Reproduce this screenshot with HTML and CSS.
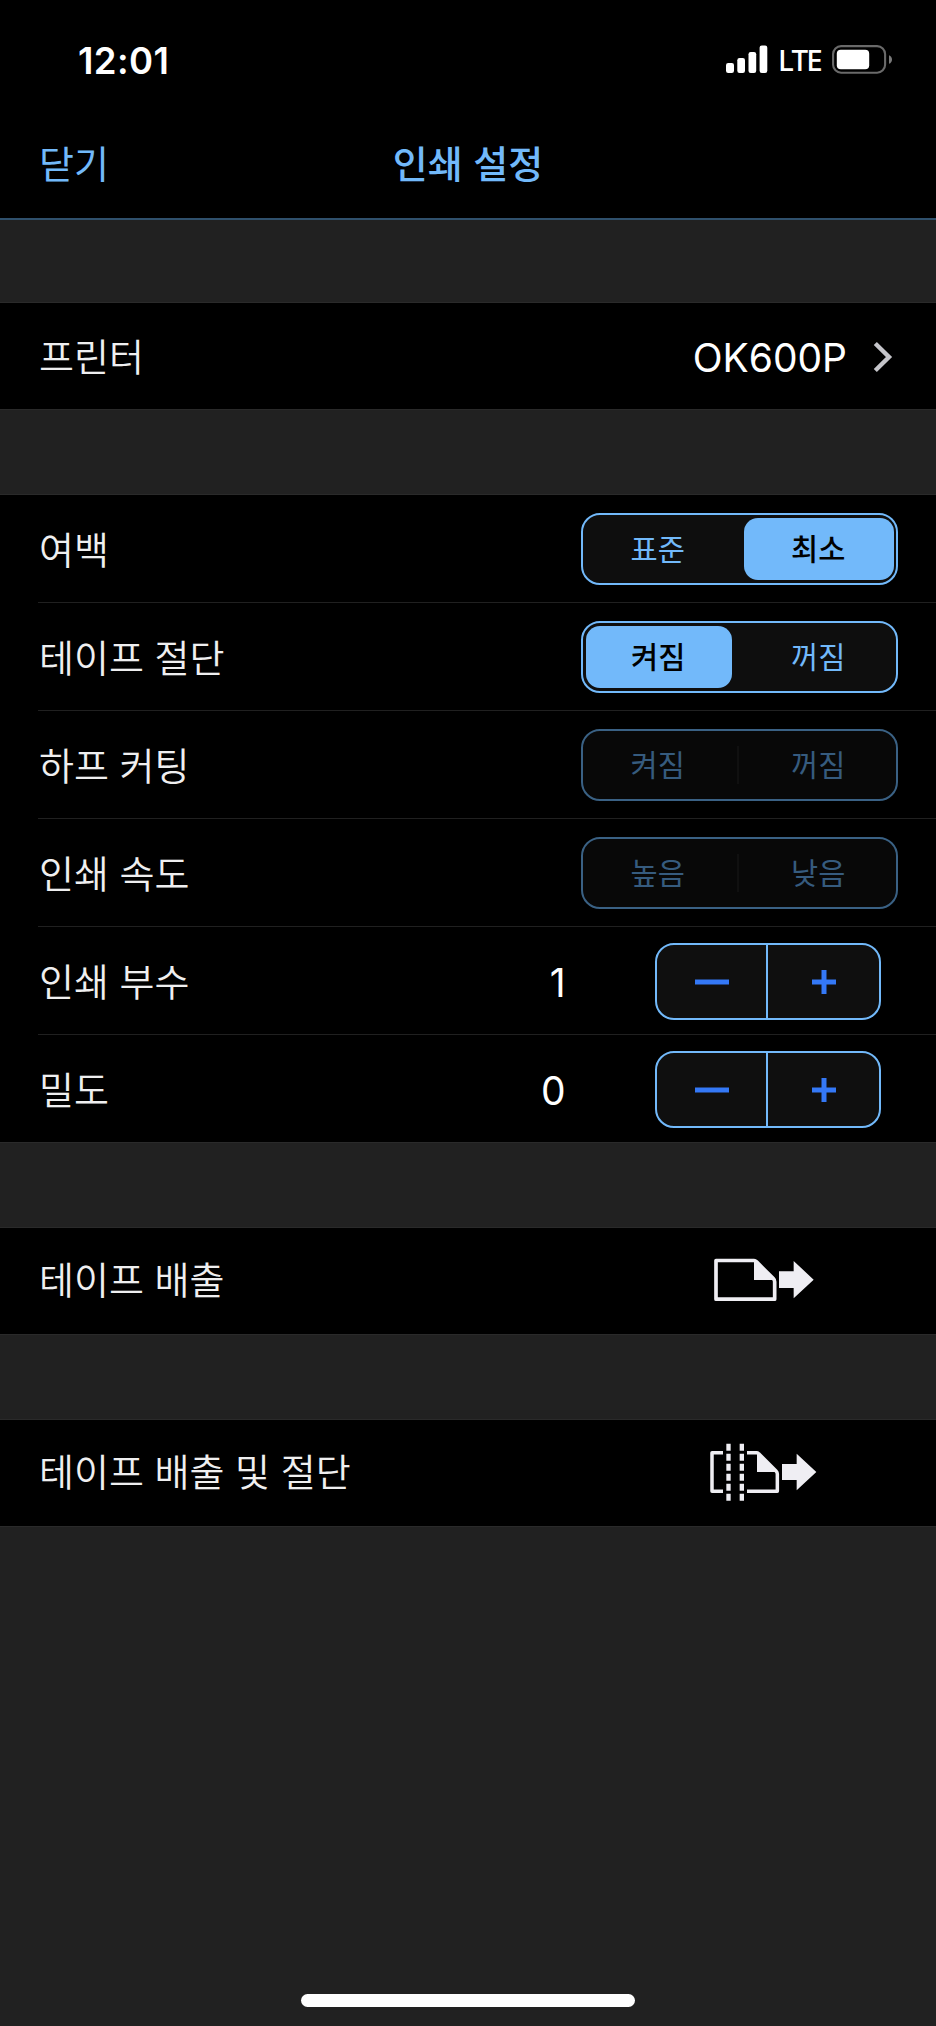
FILE: index.html
```html
<!DOCTYPE html>
<html lang="ko">
<head>
<meta charset="utf-8">
<title>인쇄 설정</title>
<link rel="stylesheet" href="styles.css">
</head>
<body>
<div class="screen">
  <header class="header">
    <div class="status">
      <span class="time">12:01</span>
      <div class="status-right">
        <svg class="signal" width="42" height="28" viewBox="0 0 42 28" fill="#fff">
          <rect x="0" y="18" width="8" height="10" rx="2.2"/>
          <rect x="11.3" y="13" width="7.7" height="15" rx="2.2"/>
          <rect x="22.5" y="7" width="7.7" height="21" rx="2.2"/>
          <rect x="33.6" y="0.5" width="7.7" height="27.5" rx="2.2"/>
        </svg>
        <span class="carrier">LTE</span>
        <svg class="battery" width="61" height="29" viewBox="0 0 61 29">
          <rect x="1.1" y="1.1" width="52" height="26.6" rx="8" fill="none" stroke="#6a6a6a" stroke-width="2.1"/>
          <rect x="4.8" y="4.8" width="32.4" height="19.4" rx="4" fill="#fff"/>
          <path d="M57 10.2c4 1.4 4 7.2 0 8.6z" fill="#7a7a7a"/>
        </svg>
      </div>
    </div>
    <nav class="nav">
      <span class="close">닫기</span>
      <h1 class="title">인쇄 설정</h1>
    </nav>
  </header>

  <main class="groups">
    <section class="group">
      <div class="row">
        <span class="label">프린터</span>
        <span class="printer">OK600P</span>
        <svg class="chevron" width="20" height="32" viewBox="0 0 20 32" fill="none" stroke="#c5c5ca" stroke-width="4.400"><path d="M2.3 2.5L16 16L2.3 29.5"/></svg>
      </div>
    </section>

    <section class="group">
      <div class="row">
        <span class="label">여백</span>
        <div class="segment"><span class="option">표준</span><i class="split"></i><span class="option selected end">최소</span></div>
      </div>
      <div class="row">
        <span class="label">테이프 절단</span>
        <div class="segment"><span class="option selected start">켜짐</span><i class="split"></i><span class="option">꺼짐</span></div>
      </div>
      <div class="row">
        <span class="label">하프 커팅</span>
        <div class="segment disabled"><span class="option">켜짐</span><i class="split"></i><span class="option">꺼짐</span></div>
      </div>
      <div class="row">
        <span class="label">인쇄 속도</span>
        <div class="segment disabled"><span class="option">높음</span><i class="split"></i><span class="option">낮음</span></div>
      </div>
      <div class="row">
        <span class="label">인쇄 부수</span>
        <span class="value">1</span>
        <div class="stepper">
          <span class="step"><svg width="36" height="26" viewBox="0 0 36 26"><path d="M1 13H35" stroke="#3478f6" stroke-width="5"/></svg></span>
          <span class="step"><svg width="26" height="26" viewBox="0 0 26 26"><path d="M1 13H25M13 1V25" stroke="#3478f6" stroke-width="5"/></svg></span>
        </div>
      </div>
      <div class="row">
        <span class="label">밀도</span>
        <span class="value">0</span>
        <div class="stepper">
          <span class="step"><svg width="36" height="26" viewBox="0 0 36 26"><path d="M1 13H35" stroke="#3478f6" stroke-width="5"/></svg></span>
          <span class="step"><svg width="26" height="26" viewBox="0 0 26 26"><path d="M1 13H25M13 1V25" stroke="#3478f6" stroke-width="5"/></svg></span>
        </div>
      </div>
    </section>

    <section class="group">
      <div class="row">
        <span class="label action">테이프 배출</span>
        <svg class="feed" width="116" height="60" viewBox="54 93 348 180" fill="#efeef3">
          <path d="M78 121.500H192Q196 121.500 199 125L250 176Q254 180 254 185V237.500H78Z" fill="none" stroke="#efeef3" stroke-width="11" stroke-linejoin="round"/>
          <path d="M192 118L256 180H192Z"/>
          <path d="M267 154H311V123L371 179L311 235V204H267Z"/>
        </svg>
      </div>
    </section>

    <section class="group">
      <div class="row">
        <span class="label action">테이프 배출 및 절단</span>
        <svg class="feed" width="116" height="60" viewBox="54 99 348 180" fill="#efeef3">
          <path d="M99 128H66V244H99M171 128H200Q204 128 207 132L258 183Q262 187 262 192V244H171" fill="none" stroke="#efeef3" stroke-width="10.500" stroke-linejoin="round"/>
          <path d="M201 124L264 186H201Z"/>
          <path d="M276 162H320V131L379 186L320 241V210H276Z"/>
          <path d="M115.500 101V272M155.500 101V272" fill="none" stroke="#efeef3" stroke-width="13" stroke-dasharray="21 9"/>
        </svg>
      </div>
    </section>
  </main>
  <div class="home"></div>
</div>
</body>
</html>
```
FILE: styles.css
```css
* { box-sizing: border-box; }

body {
  margin: 0;
  background: #212121;
  color: #efeff0;
  font-family: Inter, "Noto Sans CJK KR", sans-serif;
}

.screen { position: relative; width: 936px; height: 2026px; overflow: hidden; }

.header { height: 220px; background: #000; border-bottom: 2px solid #2f506c; }

.status {
  display: flex;
  align-items: center;
  justify-content: space-between;
  height: 118px;
  padding: 0 43px 0 78px;
  color: #fff;
}
.time { padding-top: 3px; font-size: 36.500px; font-weight: 600; letter-spacing: 0.400px; line-height: 44px; }
.status-right { display: flex; align-items: center; height: 30px; }
.signal { margin-right: 10px; }
.carrier {
  width: 54px;
  padding-top: 1px;
  font-family: "Noto Sans", sans-serif;
  font-size: 29.500px;
  font-weight: 500;
  letter-spacing: -1.700px;
  line-height: 30px;
}

.nav {
  display: grid;
  grid-template-columns: 200px 1fr 200px;
  align-items: center;
  height: 96px;
  padding: 0 39px 9px;
  color: #72b9fa;
  font-family: "Noto Sans CJK KR", sans-serif;
}
.close { font-size: 38px; }
.title { margin: 0; font-size: 38px; font-weight: 500; text-align: center; }

.groups { display: flex; flex-direction: column; gap: 84px; padding-top: 82px; }
.group { background: #000; border-top: 1px solid #2a2a2a; border-bottom: 1px solid #2a2a2a; }
.row {
  display: flex;
  align-items: center;
  height: 106px;
  margin-left: 38px;
  padding-right: 38px;
}
.row:not(:only-child) { height: 107px; }
.row:not(:last-child) { height: 108px; border-bottom: 1px solid #202020; }

.label {
  flex: 1;
  padding-left: 1px;
  padding-bottom: 3px;
  font-family: "Noto Sans CJK KR", sans-serif;
  font-size: 38px;
  font-weight: 350;
}
.action { padding-bottom: 7px; }

.printer { padding-top: 3px; color: #fff; font-size: 39px; }
.chevron { margin: 2px 5px 0 26px; }

.segment {
  display: grid;
  grid-template-columns: 150.500px 8px 154.500px;
  width: 317px;
  height: 72px;
  margin-top: 1px;
  border: 2px solid #72b9fa;
  border-radius: 19px;
  background: #0e0e0e;
  color: #72b9fa;
  font-family: "Noto Sans CJK KR", sans-serif;
  font-size: 29.500px;
}
.option { display: flex; align-items: center; justify-content: center; padding: 0 1px 4px 0; }
.selected {
  margin-top: 2.500px;
  margin-bottom: 3px;
  padding-bottom: 3px;
  border-radius: 14px;
  background: #72b9fa;
  color: #000;
  font-weight: 500;
}
.start { margin-left: 2.500px; margin-right: 1.500px; }
.end { margin-left: 2.500px; margin-right: 2.500px; }
.split { width: 2px; height: 38px; align-self: center; margin-left: 3px; }
.disabled { border-color: #3a6184; background: #080808; color: #365b7e; }
.disabled .split { background: #101010; }

.value { margin-right: 89.500px; padding-top: 4px; color: #fff; font-size: 39px; }
.stepper {
  display: grid;
  grid-template-columns: 109px 113px;
  width: 226px;
  height: 77px;
  margin: 2px 17px 0 0;
  border: 2px solid #72b9fa;
  border-radius: 19px;
  background: #0f0f0f;
}
.step { display: flex; align-items: center; justify-content: center; }
.step + .step { border-left: 2.500px solid #72b9fa; }

.feed { margin-right: 74px; }

.home {
  position: absolute;
  left: 301px;
  top: 1994px;
  width: 334px;
  height: 13px;
  border-radius: 7px;
  background: #fff;
}
```
